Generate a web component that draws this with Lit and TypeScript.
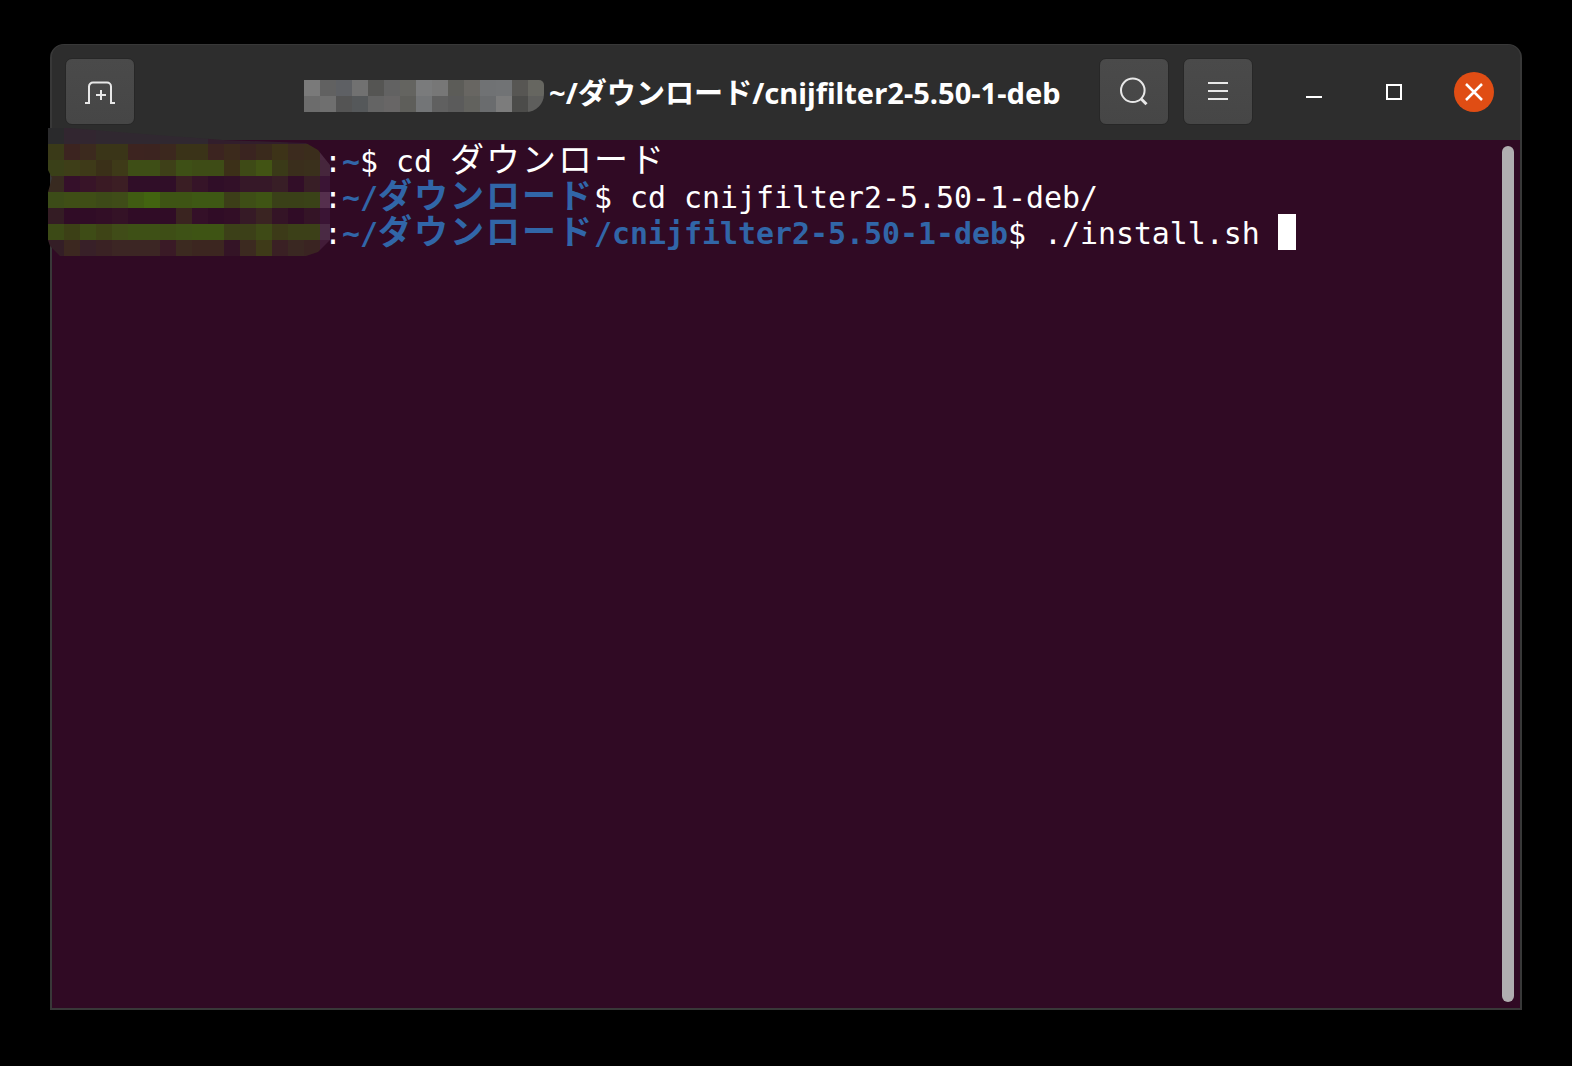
import { LitElement, html, css } from "lit";
import { customElement } from "lit/decorators.js";

const titleMosaic = [
  ["#7a7a7a","#616161","#5e6064","#717171","#555553","#626262","#646460","#7a7b7c","#777777","#5c5c58","#686662","#707274","#717375","#575653","#666660"],
  ["#6c6c6c","#6f6f6f","#545454","#55585a","#646464","#686666","#5e5e5a","#737577","#606060","#5b5b5b","#62625e","#6a6c6e","#7c7c7c","#4c4c4a","#5e5e5c"],
];
const termMosaic = [
  ["#2a2a2c","#322630","#322630","#302830","#302830","#302830","#302830","#302830","#302830","#302830","#321e2c","#321e2c","#321e2c","#321e2c","#321e2c","#321a2c","#321a2c","#3a1c34"],
  ["#3a3a18","#3c2420","#3c2a1e","#3a3518","#3a3518","#3d2420","#3c2420","#3c281e","#3a3318","#3a3318","#3c2420","#3c2a1c","#3a2420","#3a2a1c","#3d3318","#3c2b1e","#3b2d1c","#4a2840"],
  ["#3a4018","#3e3e18","#3e3a18","#3a3018","#3e3a18","#3e4e16","#3e4e16","#3e4018","#3e5016","#3e4c16","#3e4c16","#3c3018","#3e4a16","#425414","#3a3a18","#3a2e1c","#3a301c","#46263c"],
  ["#382a20","#35102a","#381428","#3a1a24","#3c1e24","#300e28","#300e28","#300e28","#3a1e24","#361428","#300e28","#321028","#361828","#361828","#381e26","#320e28","#381e26","#3a1434"],
  ["#3c4c18","#3f4e16","#3f4e16","#3d4a18","#3f4c18","#405c12","#426410","#3e5414","#3e5414","#3e5814","#3e5814","#3c3e18","#3e4e16","#3f5414","#3a4018","#3a4018","#3a4218","#552f4d"],
  ["#341c24","#300c26","#300c26","#320e26","#341226","#300c26","#300c26","#300c26","#3a2420","#341028","#300c26","#320e26","#361a26","#3a2422","#341426","#300c26","#341426","#3a1434"],
  ["#3c4a16","#3c4016","#3e4c16","#3e4416","#404c18","#3e5016","#3e5016","#3e4e16","#3e5216","#3e5414","#3e5414","#3c4018","#3c4018","#3e4a16","#3c3a18","#3c4018","#3c4018","#4a2a44"],
  ["#341e26","#3c2820","#382028","#3a2224","#3c2624","#3c2624","#3c2624","#3a1a26","#3c2a20","#3c2620","#3c2620","#341426","#3c2a20","#3e3a18","#3a2024","#3a2822","#3a2422","#421c38"],
];

const JA = "ダウンロード";

@customElement("app-root")
export class AppRoot extends LitElement {
  static styles = css`
    :host {
      display: block;
      box-sizing: border-box;
      width: 1572px;
      height: 1066px;
      padding: 44px 50px 56px;
      background: #000;
    }
    .window {
      position: relative;
      box-sizing: border-box;
      height: 966px;
      display: flex;
      flex-direction: column;
      background: #333;
      border: 2px solid #383838;
      border-top-width: 1px;
      border-radius: 14px 14px 0 0;
    }
    .header {
      height: 95px;
      flex: none;
      display: flex;
      align-items: center;
      background: #2d2d2d;
      border-radius: 12px 12px 0 0;
      padding: 0 0 2px 13px;
      box-sizing: border-box;
    }
    .btn {
      box-sizing: border-box;
      width: 70px;
      height: 67px;
      flex: none;
      display: flex;
      align-items: center;
      justify-content: center;
      background: linear-gradient(#4a4a4a, #464646);
      border: 1px solid #272727;
      border-radius: 7px;
    }
    .btn svg, .ctl svg { display: block; }
    .title {
      display: flex;
      align-items: center;
      flex: none;
      margin-left: 169px;
      width: 795px;
      color: #fff;
      font: 700 29.1px "Noto Sans", "Noto Sans CJK JP", sans-serif;
      white-space: nowrap;
    }
    .title-text { line-height: 38px; padding-top: 2px; }
    .title-mosaic {
      display: grid;
      grid-template-columns: repeat(15, 16px);
      grid-auto-rows: 16px;
      flex: none;
      margin: 9px 5px 0 0;
      border-radius: 0 5px 18px 0;
      overflow: hidden;
    }
    .cell { width: 100%; height: 100%; }
    .ctls { display: flex; align-items: center; margin-left: 21px; }
    .gap { margin-left: 14px; }
    .ctl { width: 80px; display: flex; justify-content: center; align-items: center; }
    .close {
      width: 40px;
      height: 40px;
      border-radius: 50%;
      background: #e04d14;
      display: flex;
      align-items: center;
      justify-content: center;
      margin: 1px 20px 0;
    }
    .term {
      position: relative;
      flex: 1;
      background: #300a24;
      padding: 2px 0 0 2px;
      color: #fff;
      font: 400 29.9px "DejaVu Sans Mono", monospace;
    }
    .row { height: 36px; line-height: 32px; white-space: pre; }
    .ja {
      display: inline-block;
      height: 32px;
      line-height: 32px;
      font-family: "Noto Sans CJK JP", sans-serif;
      font-size: 34px;
      letter-spacing: 2px;
    }
    .blue { color: #3166a8; font-weight: 700; }
    .user { display: inline-block; width: 270px; }
    .cursor {
      display: inline-block;
      width: 18px;
      height: 36px;
      background: #fff;
      vertical-align: top;
    }
    .scroll {
      position: absolute;
      right: 6px;
      top: 6px;
      bottom: 6px;
      width: 12px;
      background: #b0aeb0;
      border-radius: 6px;
    }
    .term-mosaic {
      position: absolute;
      left: -4px;
      top: 83px;
      width: 282px;
      height: 128px;
      display: grid;
      grid-template-columns: repeat(18, 16px);
      grid-auto-rows: 16px;
      overflow: hidden;
      clip-path: polygon(0 0, 22px 0, 82px 5px, 175px 12px, 258px 15px, 270px 22px, 282px 37px, 282px 112px, 270px 124px, 258px 128px, 12px 128px, 2px 118px, 0 112px, 0 64px, 4px 50px, 0 42px);
    }
  `;

  private mosaic(rows: string[][], cls: string) {
    return html`<div class=${cls} aria-hidden="true">${rows.flat().map(
      (c) => html`<div class="cell" style="background:${c}"></div>`
    )}</div>`;
  }

  render() {
    return html`
      <div class="window">
        <div class="header">
          <div class="btn">
            <svg width="32" height="27" viewBox="0 0 32 27" fill="none" stroke="#e8e8e8" stroke-width="2">
              <path d="M1 25h4V8.500a4 4 0 0 1 4-4h14a4 4 0 0 1 4 4V25h4" />
              <path d="M17 12v10M12 17h10" />
            </svg>
          </div>
          <div class="title">
            ${this.mosaic(titleMosaic, "title-mosaic")}<span class="title-text">~/${JA}/cnijfilter2-5.50-1-deb</span>
          </div>
          <div class="btn">
            <svg width="32" height="33" viewBox="0 0 32 33" fill="none" stroke="#e8e8e8" stroke-width="2">
              <circle cx="14.800" cy="15.300" r="11.800" />
              <path d="M23 23.800l5.500 5.500" stroke-width="3" />
            </svg>
          </div>
          <div class="btn gap">
            <svg width="20" height="21" viewBox="0 0 20 21" fill="#e8e8e8">
              <rect y="1" width="20" height="2" /><rect y="9" width="20" height="2" /><rect y="17" width="20" height="2" />
            </svg>
          </div>
          <div class="ctls">
            <div class="ctl">
              <svg width="16" height="17" viewBox="0 0 16 17" fill="#fff"><rect y="13" width="16" height="2" /></svg>
            </div>
            <div class="ctl">
              <svg width="16" height="17" viewBox="0 0 16 17" fill="none" stroke="#fff" stroke-width="2"><rect x="1" y="2" width="14" height="14" /></svg>
            </div>
            <div class="close">
              <svg width="18" height="18" viewBox="0 0 18 18" stroke="#fff" stroke-width="2.500" fill="none"><path d="M1 1l16 16M17 1L1 17" /></svg>
            </div>
          </div>
        </div>
        <div class="term">
          <div class="row"><span class="user"></span>:<span class="blue">~</span>$ cd <span class="ja">${JA}</span></div>
          <div class="row"><span class="user"></span>:<span class="blue">~/<span class="ja">${JA}</span></span>$ cd cnijfilter2-5.50-1-deb/</div>
          <div class="row"><span class="user"></span>:<span class="blue">~/<span class="ja">${JA}</span>/cnijfilter2-5.50-1-deb</span>$ ./install.sh <span class="cursor"></span></div>
          <div class="scroll"></div>
        </div>
        ${this.mosaic(termMosaic, "term-mosaic")}
      </div>
    `;
  }
}
